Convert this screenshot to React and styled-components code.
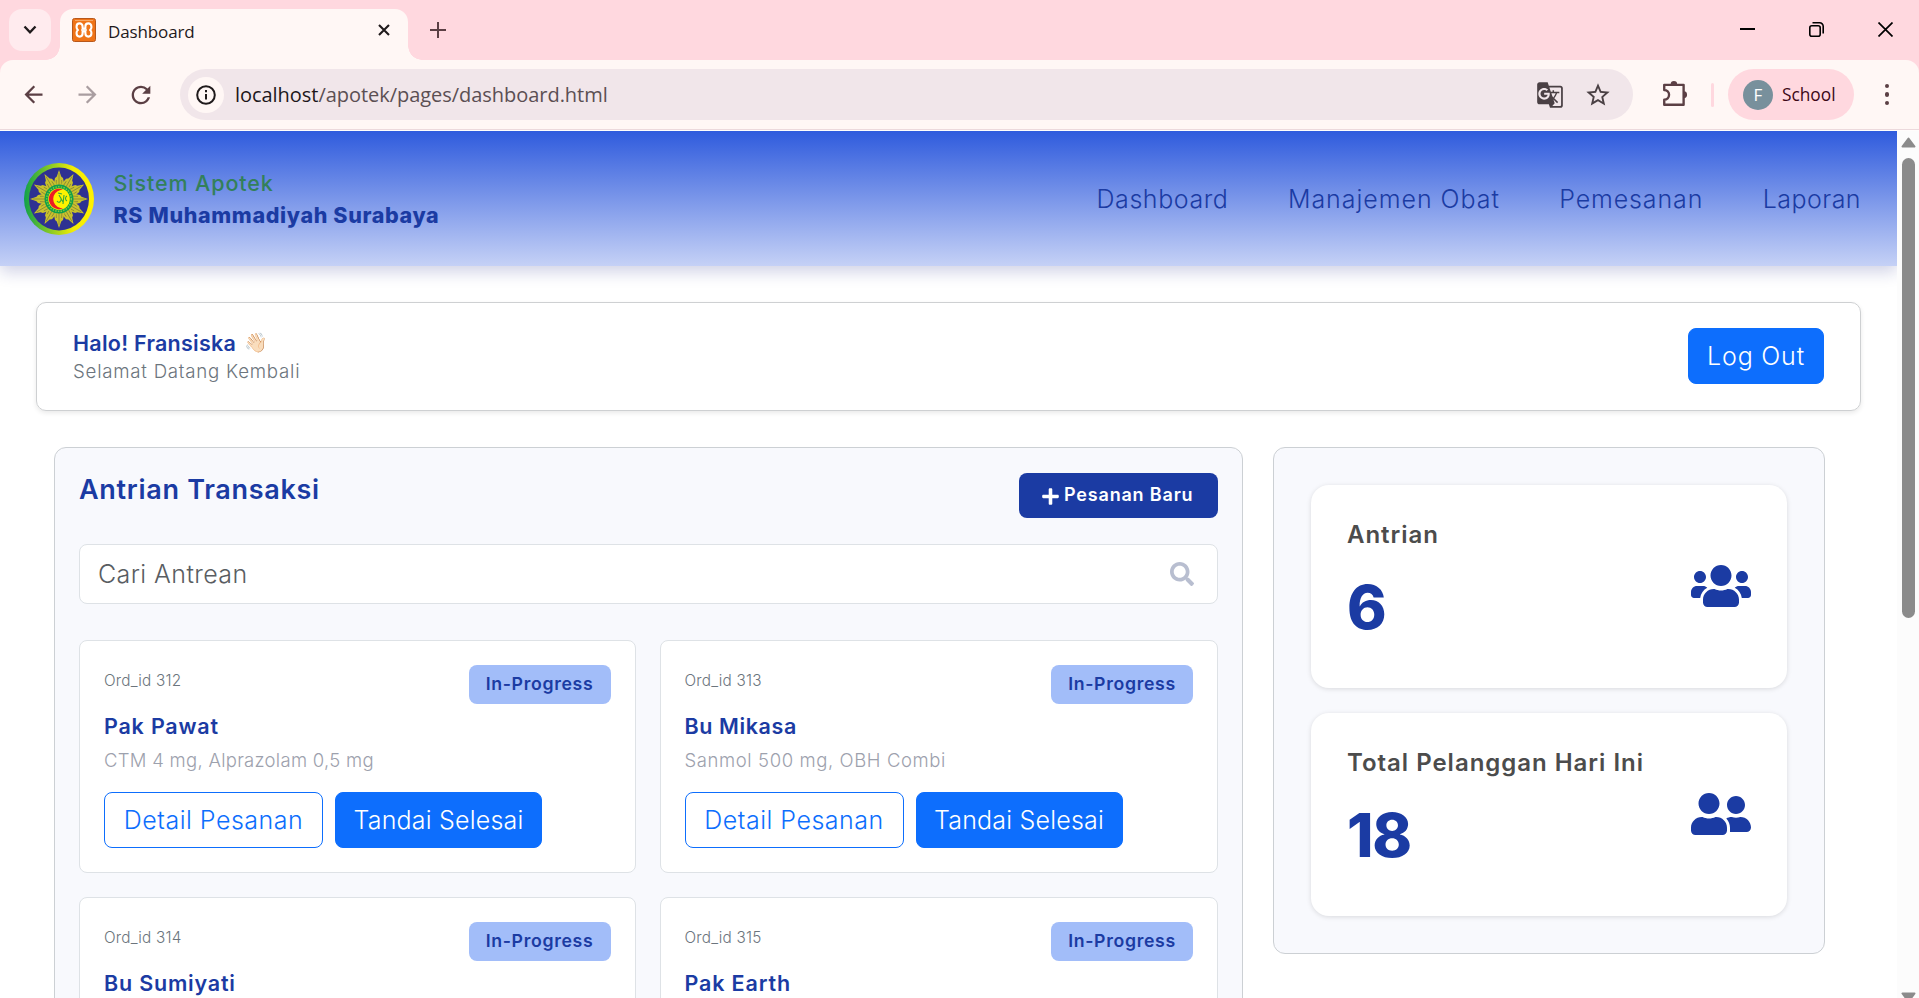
import React from "react";
import styled, { createGlobalStyle } from "styled-components";
import { FaPlus, FaSearch, FaUsers, FaUserFriends } from "react-icons/fa";
import { MdArrowBack, MdArrowForward, MdRefresh, MdGTranslate, MdStarBorder } from "react-icons/md";

const Global = createGlobalStyle`
  *, *::before, *::after { box-sizing: border-box; }
  body { margin: 0; background: #fff; overflow: hidden; }
  button { font: inherit; border: 0; padding: 0; cursor: pointer; }
`;

const colors = {
  navy: "#1b3ba3",
  primary: "#0d6efd",
  strip: "#ffd8df",
  chrome: "#fff7f5",
  chromeIcon: "#5b3f44",
};

const Window = styled.div`
  height: 998px;
  display: flex;
  flex-direction: column;
  overflow: hidden;
  background: ${colors.strip};
  font-family: Inter, "Liberation Sans", sans-serif;
`;

/* ---------- Browser chrome ---------- */
const TabStrip = styled.div`
  height: 60px;
  flex: none;
  display: flex;
  align-items: flex-start;
  padding: 9px 26px 0 9px;
  font-family: "Open Sans", "Noto Sans", sans-serif;
`;
const TabSearch = styled.button`
  width: 42px;
  height: 42px;
  border-radius: 13px;
  background: #ffebee;
  display: grid;
  place-items: center;
`;
const Tab = styled.div`
  position: relative;
  width: 348px;
  height: 51px;
  margin-left: 9px;
  padding: 0 18px 0 12px;
  border-radius: 13px 13px 0 0;
  background: ${colors.chrome};
  display: flex;
  align-items: flex-start;
  &::before,
  &::after {
    content: "";
    position: absolute;
    bottom: 0;
    width: 14px;
    height: 14px;
  }
  &::before {
    left: -14px;
    background: radial-gradient(circle at 0 0, transparent 13.5px, ${colors.chrome} 14px);
  }
  &::after {
    right: -14px;
    background: radial-gradient(circle at 100% 0, transparent 13.5px, ${colors.chrome} 14px);
  }
`;
const Favicon = styled.svg`
  width: 24px;
  height: 24px;
  margin-top: 9px;
`;
const TabTitle = styled.span`
  flex: 1;
  margin-left: 12px;
  font-size: 17px;
  line-height: 45px;
  letter-spacing: -0.12px;
  color: #1f1a1b;
`;
const TabClose = styled.svg`
  width: 12px;
  height: 12px;
  margin: 15px 0 0;
`;
const NewTab = styled.svg`
  width: 16px;
  height: 16px;
  margin: 13px 0 0 22px;
`;
const WindowControls = styled.div`
  margin-left: auto;
  margin-top: 13px;
  display: flex;
  gap: 54px;
  svg { width: 15px; height: 15px; display: block; }
`;
const Toolbar = styled.div`
  height: 71px;
  flex: none;
  display: flex;
  align-items: center;
  padding: 0 18px 2px 21px;
  border-radius: 13px 13px 0 0;
  background: ${colors.chrome};
  box-shadow: inset 0 -1px #fffdfc, inset 0 -2px #ecd9dc;
  color: ${colors.chromeIcon};
  font-family: "Open Sans", "Noto Sans", sans-serif;
`;
const NavIcons = styled.div`
  display: flex;
  align-items: center;
  gap: 26.5px;
  width: 160px;
  margin-left: -1px;
  svg { display: block; flex: none; }
`;
const Faded = styled.span`
  color: #a99da0;
`;
const AddressBar = styled.div`
  width: 1453px;
  height: 51px;
  display: flex;
  align-items: center;
  border-radius: 26px;
  padding: 0 21px 0 8px;
  background: #f1e6ea;
  color: #4a4044;
`;
const SiteInfo = styled.span`
  width: 36px;
  height: 36px;
  border-radius: 50%;
  background: ${colors.chrome};
  display: grid;
  place-items: center;
`;
const Url = styled.span`
  flex: 1;
  margin-left: 11px;
  font-size: 20px;
  line-height: 36px;
  letter-spacing: -0.04px;
  color: #5b4f53;
  b { font-weight: 400; color: #1d171a; }
`;
const BarIcons = styled.span`
  display: flex;
  align-items: center;
  gap: 20px;
`;
const Puzzle = styled.svg`
  width: 28px;
  height: 28px;
  margin: 0 -1px 1px 28px;
`;
const Divider = styled.i`
  width: 3px;
  height: 24px;
  margin: 0 14px 0 23px;
  border-radius: 2px;
  background: ${colors.strip};
`;
const Profile = styled.div`
  width: 126px;
  height: 51px;
  border-radius: 26px;
  background: ${colors.strip};
  display: flex;
  align-items: center;
  padding-left: 15px;
  gap: 9px;
  font-size: 17.3px;
  color: #3b0716;
`;
const Avatar = styled.span`
  width: 30px;
  height: 30px;
  border-radius: 50%;
  background: #78909c;
  color: #fff;
  font: 400 17px/30px "Open Sans", sans-serif;
  text-align: center;
`;
const Kebab = styled.span`
  margin-left: 30.5px;
  display: grid;
  gap: 4px;
  i { width: 4.5px; height: 4.5px; border-radius: 50%; background: ${colors.chromeIcon}; }
`;

/* ---------- Page ---------- */
const Viewport = styled.div`
  flex: 1;
  min-height: 0;
  display: flex;
  background: #fff;
`;
const Page = styled.div`
  flex: 1;
  min-width: 0;
  overflow: hidden;
`;
const Scrollbar = styled.div`
  width: 22px;
  display: flex;
  flex-direction: column;
  align-items: center;
  background: #fcfcfc;
  padding-top: 6px;
`;
const ScrollArrow = styled.svg`
  width: 15px;
  height: 11px;
  flex: none;
`;
const Thumb = styled.div`
  width: 13px;
  height: 460px;
  margin: 10px 0 374px;
  flex: none;
  border-radius: 7px;
  background: #8b8b8b;
`;
const Header = styled.header`
  height: 135px;
  padding: 0 36px 0 24px;
  display: flex;
  align-items: center;
  background: linear-gradient(#2f5bdd, #c5d1f6);
  box-shadow: 0 6px 15px rgba(20, 30, 130, 0.2);
`;
const Logo = styled.svg`
  width: 70px;
  height: 72px;
`;
const Brand = styled.div`
  flex: 1;
  margin-left: 19.5px;
  font-size: 21.5px;
  line-height: 32px;
`;
const SystemName = styled.div`
  font-weight: 500;
  letter-spacing: 0.88px;
  color: #33805a;
`;
const HospitalName = styled.div`
  font-weight: 800;
  letter-spacing: 0.63px;
  color: ${colors.navy};
`;
const Nav = styled.nav`
  display: flex;
  gap: 59.5px;
`;
const NavLink = styled.a`
  font-size: 25px;
  font-weight: 300;
  letter-spacing: ${(p) => p.$track}px;
  color: ${colors.navy};
`;
const Main = styled.main`
  padding: 36px 36px 0;
`;
const Welcome = styled.section`
  height: 109px;
  padding: 0 36px 1px;
  display: flex;
  align-items: center;
  justify-content: space-between;
  border: 1px solid #ced0d2;
  border-radius: 10px;
  box-shadow: 0 2px 5px rgba(0, 0, 0, 0.09);
`;
const Greeting = styled.div`
  display: flex;
  align-items: center;
  margin-top: 1px;
  font-size: 21.5px;
  font-weight: 600;
  line-height: 30px;
  letter-spacing: 0.26px;
  color: ${colors.navy};
`;
const Wave = styled.span`
  margin-left: 8px;
  font-size: 19px;
  letter-spacing: 0;
`;
const Subtitle = styled.div`
  font-size: 18.7px;
  font-weight: 330;
  line-height: 28px;
  letter-spacing: 0.75px;
  color: #6c757d;
`;
const Button = styled.button`
  height: 56px;
  width: ${(p) => p.$width}px;
  border-radius: 8px;
  border: 1px solid ${colors.primary};
  background: ${(p) => (p.$outline ? "#fff" : colors.primary)};
  color: ${(p) => (p.$outline ? colors.primary : "#fff")};
  font-size: 25px;
  font-weight: 340;
  letter-spacing: ${(p) => p.$track}px;
  padding-bottom: 1px;
  white-space: nowrap;
`;
const Columns = styled.div`
  display: flex;
  align-items: flex-start;
  gap: 30px;
  margin: 36px 36px 0 18px;
`;
const Panel = styled.section`
  border: 1px solid #ccd0d4;
  border-radius: 12px;
  background: #f8f9fd;
`;
const QueuePanel = styled(Panel)`
  width: 1189px;
  padding: 25px 24px;
`;
const QueueHead = styled.div`
  display: flex;
  justify-content: space-between;
  align-items: flex-start;
`;
const Title = styled.h2`
  margin: 0;
  font-size: 27px;
  font-weight: 600;
  line-height: 33px;
  letter-spacing: 0.7px;
  color: ${colors.navy};
`;
const NewOrder = styled.button`
  width: 199px;
  height: 45px;
  border-radius: 8px;
  background: ${colors.navy};
  color: #fff;
  display: flex;
  align-items: center;
  padding: 0 0 2px 22px;
  font-size: 18px;
  font-weight: 600;
  letter-spacing: 0.82px;
  svg { margin: 4px 4px 0 0; }
`;
const Search = styled.label`
  height: 60px;
  margin: 26px 0 36px;
  padding: 0 23px 1px 18px;
  display: flex;
  align-items: center;
  justify-content: space-between;
  border: 1px solid #dee2e6;
  border-radius: 8px;
  background: #fff;
  font-size: 25px;
  font-weight: 340;
  letter-spacing: 0.4px;
  color: #595d62;
`;
const OrderGrid = styled.div`
  display: grid;
  grid-template-columns: 556.5px 1fr;
  gap: 24.5px 24px;
`;
const OrderCard = styled.article`
  height: 232.5px;
  padding: 24px 24px 0;
  border: 1px solid #dee2e6;
  border-radius: 8px;
  background: #fff;
`;
const OrderHead = styled.div`
  display: flex;
  justify-content: space-between;
`;
const OrderId = styled.span`
  font-size: 15.3px;
  font-weight: 330;
  line-height: 31px;
  letter-spacing: 0.22px;
  color: #6c757d;
`;
const Badge = styled.span`
  width: 142px;
  height: 39px;
  border-radius: 8px;
  background: #a2bdf9;
  color: ${colors.navy};
  font-size: 17.7px;
  font-weight: 600;
  line-height: 38px;
  letter-spacing: 0.67px;
  text-align: center;
`;
const Patient = styled.div`
  margin-top: 7px;
  font-size: 21.5px;
  font-weight: 600;
  line-height: 30px;
  letter-spacing: ${(p) => p.$track}px;
  color: ${colors.navy};
`;
const Medicines = styled.div`
  margin: 5px 0 18px;
  font-size: 18.5px;
  font-weight: 330;
  line-height: 28px;
  letter-spacing: ${(p) => p.$track}px;
  color: #9da1ad;
`;
const Actions = styled.div`
  display: flex;
  gap: 12px;
`;
const StatsPanel = styled(Panel)`
  width: 552px;
  padding: 37px 37px;
  display: grid;
  gap: 25px;
`;
const Stat = styled.article`
  height: 203px;
  padding: 0 36px;
  display: flex;
  justify-content: space-between;
  align-items: center;
  border-radius: 18px;
  background: #fff;
  color: ${colors.navy};
  box-shadow: 0 1px 5px rgba(0, 0, 0, 0.13);
  > svg { margin-bottom: 2px; }
`;
const StatText = styled.div`
  align-self: flex-start;
  padding-top: 32px;
`;
const StatLabel = styled.div`
  font-size: 24px;
  font-weight: 570;
  line-height: 36px;
  letter-spacing: 0.98px;
  color: #4c4c4c;
`;
const StatValue = styled.div`
  margin-top: 18px;
  font-size: 60px;
  font-weight: 850;
  line-height: 72px;
  letter-spacing: -1.2px;
`;

const rays = Array.from({ length: 12 }, (_, i) => i * 30);

function HospitalLogo() {
  return (
    <Logo viewBox="0 0 70 72">
      <defs>
        <linearGradient id="ring">
          <stop offset="0" stopColor="#0fa14a" />
          <stop offset="0.7" stopColor="#f2ec05" />
          <stop offset="1" stopColor="#fff200" />
        </linearGradient>
      </defs>
      <ellipse cx="35" cy="36" rx="35" ry="36" fill="url(#ring)" />
      <ellipse cx="35" cy="36" rx="30" ry="31.5" fill="#2e3192" />
      {rays.map((r) => (
        <g key={r} transform={`rotate(${r} 35 36)`}>
          <path d="M35 7 37.200 13.500 39 15 41 25 35 36 29 25 31 15 32.800 13.500Z" fill="#c9c22c" />
          <path d="M35 10v16M32.400 17l-.5 9M37.600 17l.5 9" stroke="#7d7b3a" strokeWidth=".7" />
        </g>
      ))}
      <circle cx="35" cy="36" r="14.500" fill="#10a04a" />
      <circle cx="35" cy="36" r="12.300" fill="none" stroke="#8cc93a" strokeWidth="1.400" strokeDasharray="1.400 1.300" />
      <circle cx="35" cy="36" r="10.800" fill="#fff200" />
      <path d="M39 26.600A10.200 10.200 0 1 0 39 45.400 9 9 0 0 1 36.500 45 9.200 9.200 0 0 1 36.500 27 9 9 0 0 1 39 26.600z" fill="#ed1c24" />
      <path d="M33 38c2 3 5 0 4-3m-2-3 4 7m1-7-1 9m4-8c-2 1-2 4 0 5m-9-8 4 1" fill="none" stroke="#35a83a" strokeWidth="1.100" />
    </Logo>
  );
}

const orders = [
  { id: 312, name: "Pak Pawat", track: 0.8, meds: "CTM 4 mg, Alprazolam 0,5 mg", medTrack: 0.28 },
  { id: 313, name: "Bu Mikasa", track: 0.6, meds: "Sanmol 500 mg, OBH Combi", medTrack: 0.6 },
  { id: 314, name: "Bu Sumiyati", track: 0.8, meds: "", medTrack: 0 },
  { id: 315, name: "Pak Earth", track: 0.85, meds: "", medTrack: 0 },
];

export default function App() {
  return (
    <Window>
      <Global />
      <TabStrip>
        <TabSearch>
          <svg width="14" height="10" viewBox="0 0 14 10"><path d="M1.500 1.500 7 7.300l5.500-5.800" fill="none" stroke="#1f1a1b" strokeWidth="2.300" /></svg>
        </TabSearch>
        <Tab>
          <Favicon viewBox="0 0 24 24">
            <rect x=".5" y=".5" width="23" height="23" rx="2" fill="#ef7418" stroke="#b8581b" />
            <path d="M3 2.500h18" stroke="#f7a866" />
            <path d="M10.600 10.600V8.400a3 3 0 0 0-6 0v1.200c0 1 .5 1.800 1.400 2.400-.9.600-1.400 1.400-1.400 2.400v1.200a3 3 0 0 0 6 0v-2.200h2.800v2.200a3 3 0 0 0 6 0v-1.200c0-1-.5-1.800-1.400-2.400.9-.6 1.400-1.400 1.400-2.400V8.400a3 3 0 0 0-6 0v2.200z" fill="none" stroke="#fff" strokeWidth="2.100" strokeLinejoin="round" />
            <path d="M9 12h6" stroke="#fff" strokeWidth="1.400" />
          </Favicon>
          <TabTitle>Dashboard</TabTitle>
          <TabClose viewBox="0 0 12 12"><path d="M1 1l10 10M11 1 1 11" stroke="#1f1a1b" strokeWidth="2.100" /></TabClose>
        </Tab>
        <NewTab viewBox="0 0 16 16"><path d="M8 0v16M0 8h16" stroke={colors.chromeIcon} strokeWidth="2" /></NewTab>
        <WindowControls>
          <svg viewBox="0 0 15 15"><path d="M0 7h15" stroke="#000" strokeWidth="2" /></svg>
          <svg viewBox="0 0 15 15" fill="none" stroke="#000" strokeWidth="1.600">
            <rect x=".8" y="3.800" width="10.400" height="10.400" rx="2" />
            <path d="M3.500.8h7.200a3.500 3.500 0 0 1 3.500 3.500v7.200" />
          </svg>
          <svg viewBox="0 0 15 15"><path d="M.5.5l14 14M14.500.5l-14 14" stroke="#000" strokeWidth="1.700" /></svg>
        </WindowControls>
      </TabStrip>

      <Toolbar>
        <NavIcons>
          <MdArrowBack size={27} />
          <Faded><MdArrowForward size={27} /></Faded>
          <MdRefresh size={28} />
        </NavIcons>
        <AddressBar>
          <SiteInfo>
            <svg width="20" height="20" viewBox="0 0 20 20" fill="none" stroke="#1f1a1b" strokeWidth="2">
              <circle cx="10" cy="10" r="8.800" />
              <path d="M10 9v5.500M10 5v2.200" />
            </svg>
          </SiteInfo>
          <Url><b>localhost</b>/apotek/pages/dashboard.html</Url>
          <BarIcons>
            <MdGTranslate size={28} />
            <MdStarBorder size={28} />
          </BarIcons>
        </AddressBar>
        <Puzzle viewBox="0 0 26 26">
          <path d="M3 4.500h18V23H3v-4.700a4.200 4.200 0 0 0 0-9z" fill="none" stroke={colors.chromeIcon} strokeWidth="2.200" strokeLinejoin="round" />
          <path d="M9 4a3 3 0 0 1 6 0zM21 10.500a3.200 3.200 0 0 1 0 6.400z" fill={colors.chromeIcon} />
        </Puzzle>
        <Divider />
        <Profile><Avatar>F</Avatar>School</Profile>
        <Kebab><i /><i /><i /></Kebab>
      </Toolbar>

      <Viewport>
        <Page>
          <Header>
            <HospitalLogo />
            <Brand>
              <SystemName>Sistem Apotek</SystemName>
              <HospitalName>RS Muhammadiyah Surabaya</HospitalName>
            </Brand>
            <Nav>
              <NavLink $track={0.57}>Dashboard</NavLink>
              <NavLink $track={0.95}>Manajemen Obat</NavLink>
              <NavLink $track={0.86}>Pemesanan</NavLink>
              <NavLink $track={0.45}>Laporan</NavLink>
            </Nav>
          </Header>
          <Main>
            <Welcome>
              <div>
                <Greeting>Halo! Fransiska<Wave>👋🏻</Wave></Greeting>
                <Subtitle>Selamat Datang Kembali</Subtitle>
              </div>
              <Button $width={136} $track={0.8}>Log Out</Button>
            </Welcome>
            <Columns>
              <QueuePanel>
                <QueueHead>
                  <Title>Antrian Transaksi</Title>
                  <NewOrder><FaPlus size={19} />Pesanan Baru</NewOrder>
                </QueueHead>
                <Search>Cari Antrean<FaSearch size={24} color="#b8bed0" /></Search>
                <OrderGrid>
                  {orders.map((o) => (
                    <OrderCard key={o.id}>
                      <OrderHead>
                        <OrderId>Ord_id {o.id}</OrderId>
                        <Badge>In-Progress</Badge>
                      </OrderHead>
                      <Patient $track={o.track}>{o.name}</Patient>
                      {o.meds && (
                        <>
                          <Medicines $track={o.medTrack}>{o.meds}</Medicines>
                          <Actions>
                            <Button $outline $width={219} $track={0.5}>Detail Pesanan</Button>
                            <Button $width={207} $track={0.2}>Tandai Selesai</Button>
                          </Actions>
                        </>
                      )}
                    </OrderCard>
                  ))}
                </OrderGrid>
              </QueuePanel>
              <StatsPanel>
                <Stat>
                  <StatText>
                    <StatLabel>Antrian</StatLabel>
                    <StatValue>6</StatValue>
                  </StatText>
                  <FaUsers size={60} />
                </Stat>
                <Stat>
                  <StatText>
                    <StatLabel>Total Pelanggan Hari Ini</StatLabel>
                    <StatValue>18</StatValue>
                  </StatText>
                  <FaUserFriends size={60} />
                </Stat>
              </StatsPanel>
            </Columns>
          </Main>
        </Page>
        <Scrollbar>
          <ScrollArrow viewBox="0 0 15 11"><path d="M7.500 1.500 13.500 9.500h-12z" fill="#8b8b8b" stroke="#8b8b8b" strokeWidth="2" strokeLinejoin="round" /></ScrollArrow>
          <Thumb />
          <ScrollArrow viewBox="0 0 15 11"><path d="M1.500 1.500h12l-6 8z" fill="#8b8b8b" stroke="#8b8b8b" strokeWidth="2" strokeLinejoin="round" /></ScrollArrow>
        </Scrollbar>
      </Viewport>
    </Window>
  );
}
